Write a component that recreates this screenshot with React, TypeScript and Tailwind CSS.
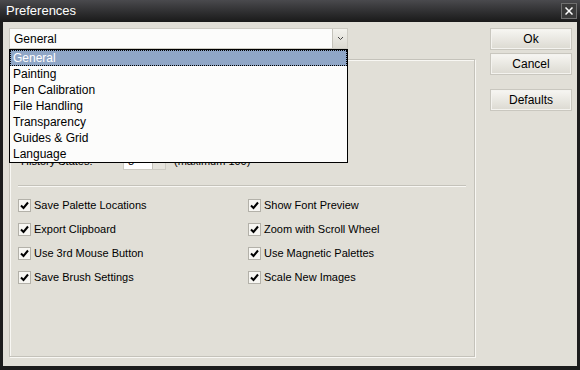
const items = [
  "General",
  "Painting",
  "Pen Calibration",
  "File Handling",
  "Transparency",
  "Guides & Grid",
  "Language",
];

const checks = [
  ["Save Palette Locations", "Show Font Preview"],
  ["Export Clipboard", "Zoom with Scroll Wheel"],
  ["Use 3rd Mouse Button", "Use Magnetic Palettes"],
  ["Save Brush Settings", "Scale New Images"],
];

const Check = ({ label }: { label: string }) => (
  <div className="flex items-center h-[24px]">
    <div className="w-[13px] h-[13px] border border-[#b3b1a9] bg-[#f7f6f2] flex items-center justify-center">
      <svg width="9" height="9" viewBox="0 0 9 9">
        <path d="M1 4.5 L3.5 7 L8 1.5" fill="none" stroke="#000" strokeWidth="2" />
      </svg>
    </div>
    <span className="ml-[3px]">{label}</span>
  </div>
);

const Btn = ({ label }: { label: string }) => (
  <button className="w-[80px] h-[20px] border border-[#f4f3ef] outline outline-1 outline-[#c9c7bf] bg-gradient-to-b from-[#f6f5f1] to-[#dddbd3] text-[12px] text-black">
    {label}
  </button>
);

export default function App() {
  return (
    <div className="w-[580px] h-[370px] flex flex-col bg-[#1c1c1c] font-['Liberation_Sans',Arial,sans-serif] text-[11px] text-black">
      <div className="h-[22px] flex items-center justify-between pl-[6px] pr-[3px] bg-gradient-to-b from-[#4a4a4e] to-[#1a1a1a]">
        <span className="text-[13px] text-white">Preferences</span>
        <div className="w-[16px] h-[16px] border border-[#707070] bg-[#3a3a3a] flex items-center justify-center">
          <svg width="8" height="8" viewBox="0 0 8 8">
            <path d="M0.5 0.5 L7.5 7.5 M7.5 0.5 L0.5 7.5" stroke="#fff" strokeWidth="1.5" />
          </svg>
        </div>
      </div>
      <div className="flex-1 mx-[3px] mb-[4px] bg-[#e1dfd7] flex pt-[6px] pl-[6px] pr-[6px] pb-[9px] gap-[16px]">
        <div className="relative w-[466px] flex flex-col">
          <div className="w-[339px] h-[21px] border border-[#cdcbc3] bg-[#fcfcfb] flex items-center justify-between">
            <span className="pl-[4px] text-[12px]">General</span>
            <div className="w-[15px] h-[19px] bg-gradient-to-b from-[#f2f1ec] to-[#dcdad2] border-l border-[#c4c2ba] flex items-center justify-center">
              <svg width="7" height="5" viewBox="0 0 7 5">
                <path d="M1 1 L3.5 3.5 L6 1" fill="none" stroke="#444" strokeWidth="1" />
              </svg>
            </div>
          </div>
          <div className="mt-[10px] flex-1 border border-[#c4c2ba] shadow-[inset_1px_1px_0_#f8f7f3,1px_1px_0_#f8f7f3] px-[8px]">
            <div className="flex items-center h-[18px] mt-[92px] pl-[3px]">
              <span className="w-[102px]">History States:</span>
              <div className="w-[43px] h-[18px] bg-white border border-[#cdcbc3] flex justify-between">
                <span className="pl-[4px]">8</span>
                <div className="w-[13px] h-full bg-[#e6e4dd] border-l border-[#c4c2ba]" />
              </div>
              <span className="ml-[8px]">(maximum 100)</span>
            </div>
            <div className="mt-[15px] h-[2px] border-t border-[#c4c2ba] border-b border-b-[#f8f7f3]" />
            <div className="grid grid-cols-[230px_1fr] mt-[6px]">
              {checks.map(([a, b]) => (
                <>
                  <Check key={a} label={a} />
                  <Check key={b} label={b} />
                </>
              ))}
            </div>
          </div>
          <div className="absolute left-0 top-[21px] w-[339px] border border-black bg-[#fcfcfb]">
            {items.map((it, i) => (
              <div
                key={it}
                className={
                  i === 0
                    ? "h-[16px] flex items-center pl-[2px] bg-[#8fa6c6] text-white border border-dotted border-black"
                    : "h-[16px] flex items-center pl-[3px]"
                }
              >
                <span className="text-[12px]">{it}</span>
              </div>
            ))}
          </div>
        </div>
        <div className="flex flex-col gap-[5px] pt-[1px]">
          <Btn label="Ok" />
          <Btn label="Cancel" />
          <div className="h-[6px]" />
          <Btn label="Defaults" />
        </div>
      </div>
    </div>
  );
}
